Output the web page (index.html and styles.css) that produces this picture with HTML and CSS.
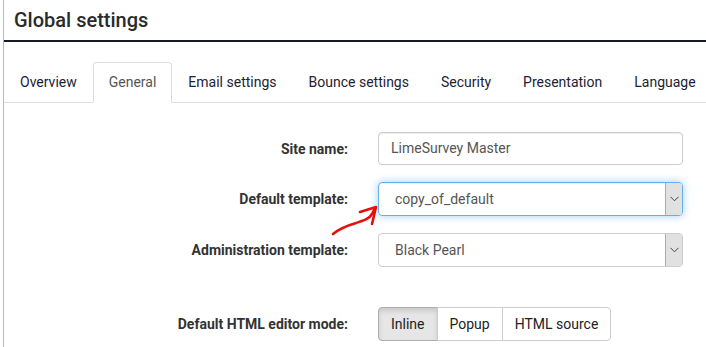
FILE: index.html
```html
<!DOCTYPE html>
<html lang="en">

<head>
   <meta charset="UTF-8">
   <meta name="viewport" content="width=device-width, initial-scale=1.0">
   <title>Global settings</title>
   <link rel="stylesheet" href="styles.css">
</head>

<body>
   <div class="side-strip"></div>

   <div class="page">
      <h1 class="page-title">Global settings</h1>

      <ul class="nav-tabs">
         <li>Overview</li>
         <li class="active">General</li>
         <li>Email settings</li>
         <li>Bounce settings</li>
         <li>Security</li>
         <li>Presentation</li>
         <li>Language</li>
      </ul>

      <div class="settings-form">
         <div class="form-row">
            <label class="form-label">Site name:</label>
            <div class="form-control">LimeSurvey Master</div>
         </div>

         <div class="form-row">
            <label class="form-label">Default template:</label>
            <div class="form-select focused">
               <span class="select-value">copy_of_default</span>
               <span class="select-arrow">
                  <svg width="9" height="6" viewBox="0 0 9 6"><path d="M0.5 0.8 L4.5 4.8 L8.5 0.8" fill="none" stroke="#444" stroke-width="1"/></svg>
               </span>
            </div>
         </div>

         <div class="form-row">
            <label class="form-label">Administration template:</label>
            <div class="form-select">
               <span class="select-value">Black Pearl</span>
               <span class="select-arrow">
                  <svg width="9" height="6" viewBox="0 0 9 6"><path d="M0.5 0.8 L4.5 4.8 L8.5 0.8" fill="none" stroke="#444" stroke-width="1"/></svg>
               </span>
            </div>
         </div>

         <div class="form-row editor-row">
            <label class="form-label">Default HTML editor mode:</label>
            <div class="btn-group">
               <span class="btn active">Inline</span>
               <span class="btn">Popup</span>
               <span class="btn">HTML source</span>
            </div>
         </div>
      </div>

      <!-- red hand-drawn arrow pointing at the template select -->
      <svg class="annotation" width="60" height="40" viewBox="0 0 60 40">
         <path d="M4 34 C10 29 17 26 27 23 C36 20 40 19 43 14 L46 8" fill="none" stroke="#e3100c" stroke-width="2.6" stroke-linecap="round"/>
         <path d="M31 12 L47 7 L43 24" fill="none" stroke="#e3100c" stroke-width="2.6" stroke-linecap="round" stroke-linejoin="round"/>
      </svg>
   </div>
</body>

</html>
```

FILE: styles.css
```css
body {
   margin: 0;
   display: flex;
   font-family: 'Roboto', 'Liberation Sans', sans-serif;
   font-size: 14px;
   color: #333;
   background-color: #fff;
   height: 347px;
   overflow: hidden;
}

.side-strip {
   width: 3px;
   flex-shrink: 0;
   border-right: 1px solid #a9bccd;
   background-color: #fff;
}

.page {
   position: relative;
   flex-grow: 1;
   min-width: 0;
}

.page-title {
   margin: 0;
   padding: 6px 10px 0;
   height: 34px;
   font-size: 20px;
   font-weight: 500;
   color: #2b2b2b;
   line-height: 28px;
   border-bottom: 2px solid #14192b;
}

/* Tabs */
.nav-tabs {
   list-style: none;
   margin: 20px 0 0;
   padding: 0;
   display: flex;
   border-bottom: 1px solid #ddd;
   white-space: nowrap;
}

.nav-tabs li {
   padding: 10px 15px;
   margin-bottom: -1px;
   line-height: 19px;
   color: #1c2233;
   border: 1px solid transparent;
   border-radius: 4px 4px 0 0;
}

.nav-tabs li.active {
   color: #555;
   background-color: #fff;
   border-color: #ddd;
   border-bottom-color: #fff;
}

/* Form */
.settings-form {
   padding-top: 29px;
}

.form-row {
   display: grid;
   grid-template-columns: 344px 305px;
   column-gap: 30px;
   align-items: center;
   margin-bottom: 17px;
}

.editor-row {
   margin-top: 40px;
}

.form-label {
   text-align: right;
   font-weight: bold;
   color: #333;
}

.form-control {
   height: 31px;
   line-height: 31px;
   padding: 0 12px;
   border: 1px solid #ccc;
   border-radius: 4px;
   color: #555;
   box-shadow: inset 0 1px 1px rgba(0, 0, 0, 0.075);
}

.form-select {
   display: flex;
   height: 32px;
   border: 1px solid #ccc;
   border-radius: 4px;
   color: #555;
   overflow: hidden;
}

.form-select.focused {
   border-color: #66afe9;
   box-shadow: inset 0 1px 1px rgba(0, 0, 0, .075), 0 0 8px rgba(102, 175, 233, 0.6);
}

.select-value {
   flex-grow: 1;
   line-height: 32px;
   padding-left: 16px;
}

.select-arrow {
   width: 16px;
   display: flex;
   align-items: center;
   justify-content: center;
   background-color: #e1e1e1;
   border-left: 1px solid #aaa;
}

.btn-group {
   display: flex;
   justify-self: start;
}

.btn {
   height: 32px;
   line-height: 32px;
   padding: 0 12px;
   color: #222;
   border: 1px solid #ccc;
   margin-left: -1px;
   background-color: #fff;
}

.btn:first-child {
   margin-left: 0;
   border-radius: 4px 0 0 4px;
}

.btn:last-child {
   border-radius: 0 4px 4px 0;
}

.btn.active {
   background-color: #e6e6e6;
   border-color: #adadad;
   box-shadow: inset 0 3px 5px rgba(0, 0, 0, 0.125);
}

.annotation {
   position: absolute;
   left: 325px;
   top: 200px;
}
```
